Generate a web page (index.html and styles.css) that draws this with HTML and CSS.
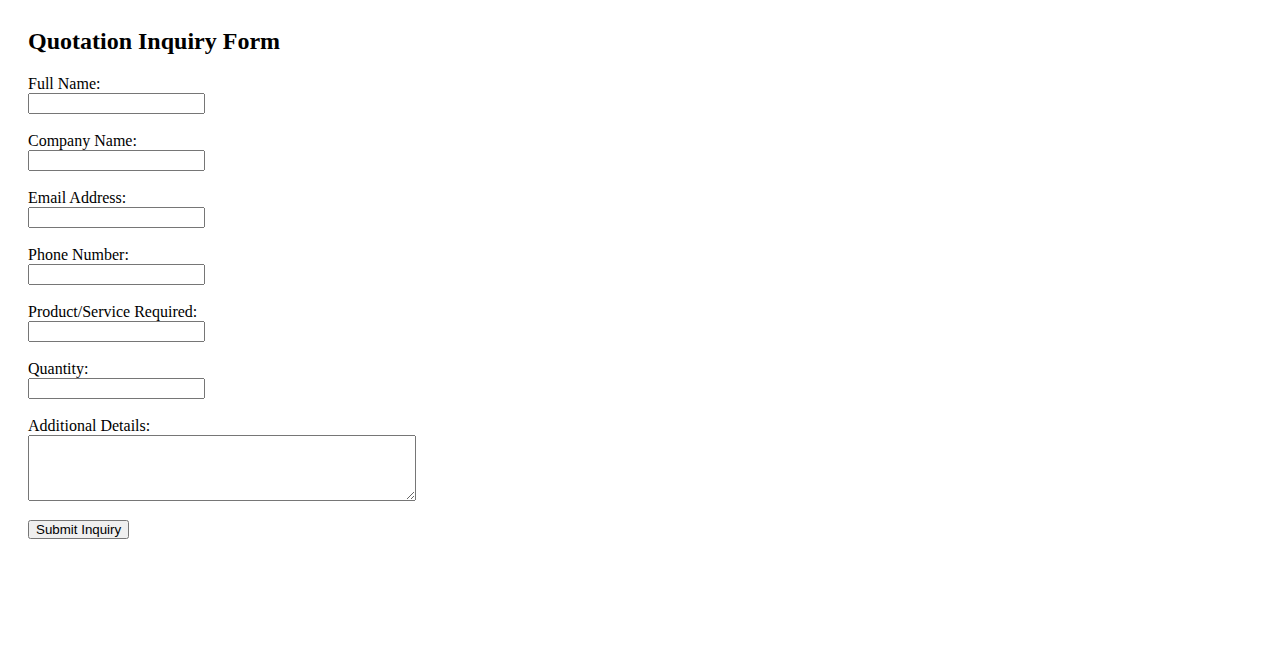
FILE: index.html
```html
<!DOCTYPE html>
<html lang="en">
<head>
<meta charset="utf-8">
<title>Quotation Inquiry Form</title>
<link rel="stylesheet" href="styles.css">
</head>
<body>
<div class="page">
<h2 class="title">Quotation Inquiry Form</h2>
<form class="form">
<label for="name">Full Name:</label><br>
<input type="text" id="name" name="name" class="field"><br><br>
<label for="company">Company Name:</label><br>
<input type="text" id="company" name="company" class="field"><br><br>
<label for="email">Email Address:</label><br>
<input type="email" id="email" name="email" class="field"><br><br>
<label for="phone">Phone Number:</label><br>
<input type="tel" id="phone" name="phone" class="field"><br><br>
<label for="product">Product/Service Required:</label><br>
<input type="text" id="product" name="product" class="field"><br><br>
<label for="quantity">Quantity:</label><br>
<input type="number" id="quantity" name="quantity" class="field"><br><br>
<label for="details">Additional Details:</label><br>
<textarea id="details" name="details" rows="4" cols="50" class="details"></textarea><br><br>
<input type="submit" value="Submit Inquiry" class="submit">
</form>
</div>
</body>
</html>
```
FILE: styles.css
```css
body {
  margin: 8px;
  font-family: "Liberation Serif", "Times New Roman", serif;
}
.page {
  padding: 20px;
}
.title {
  margin-top: 0;
  font-size: 24px;
}
.form {
  margin: 0;
}
.field {
  width: 177px;
  box-sizing: border-box;
}
.details {
  width: 388px;
  height: 66px;
  box-sizing: border-box;
  vertical-align: top;
}
.submit {
  height: 19px;
  box-sizing: border-box;
  margin-top: 1px;
  padding: 0 6px;
  font-family: "Liberation Sans", Arial, sans-serif;
  font-size: 13.33px;
}
```
